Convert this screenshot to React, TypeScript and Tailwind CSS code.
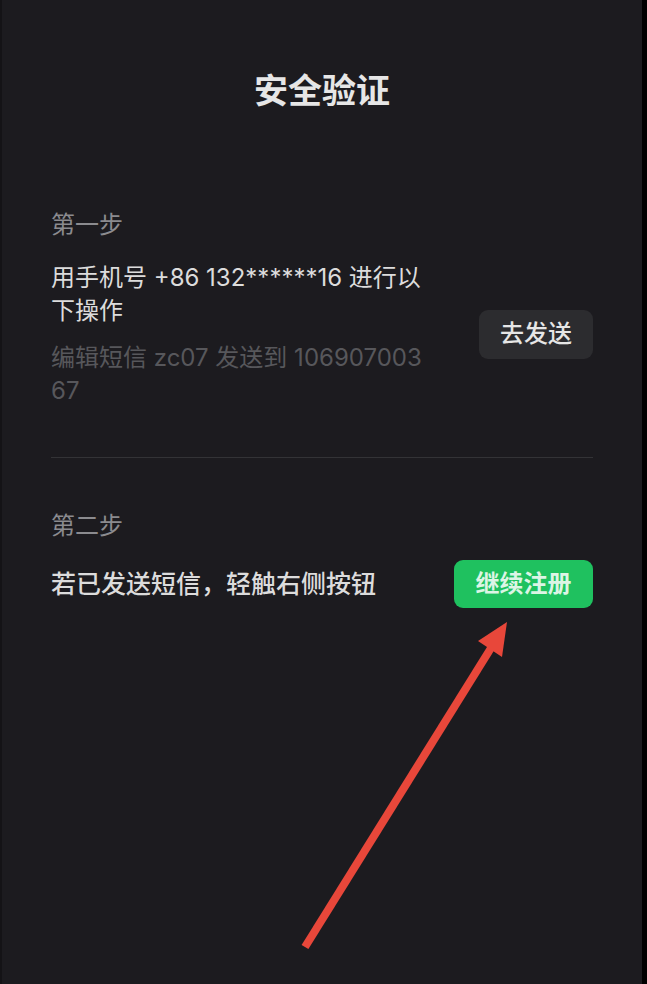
import React from 'react';

const font = { fontFamily: '"Inter", "Noto Sans CJK SC", sans-serif' };

function StepLabel({ children }: { children: React.ReactNode }) {
  return <div className="text-[24px] leading-[33px] text-[#8b8b8f]">{children}</div>;
}

// 红色标注箭头，盖在页面上
function Arrow() {
  return (
    <svg className="pointer-events-none absolute inset-0" width="647" height="984" viewBox="0 0 647 984">
      <line x1="305" y1="947" x2="491" y2="648" stroke="#e8473a" strokeWidth="8" />
      <polygon points="507,622 478,641 502,657" fill="#e8473a" />
    </svg>
  );
}

export default function App() {
  return (
    <div className="relative flex h-[984px] w-[647px] bg-black" style={font}>
      <div className="flex w-[642px] flex-col border-l-2 border-[#141316] bg-[#1c1b1f] px-[49px] pt-[71px]">
        <h1 className="text-center text-[34px] font-semibold leading-[40px] text-[#e6e6e6]">安全验证</h1>

        {/* 第一步 */}
        <div className="mt-[97px]">
          <StepLabel>第一步</StepLabel>
          <div className="mt-[20px] flex items-center justify-between">
            <div className="w-[390px] text-[24px] leading-[33px]">
              <p className="text-[#dcdcdc]">
                用手机号 +86 132******16 进行以
                <br />
                下操作
              </p>
              <p className="mt-[14px] text-[#57575b]">
                编辑短信 zc07 发送到 106907003
                <br />
                67
              </p>
            </div>
            <button
              type="button"
              className="flex h-[49px] w-[114px] items-center justify-center rounded-[9px] bg-[#2c2c2f] text-[24px] font-medium text-[#e6e6e6]"
            >
              去发送
            </button>
          </div>
        </div>

        <div className="mt-[50px] h-px bg-[#333336]" />

        {/* 第二步 */}
        <div className="mt-[51px]">
          <StepLabel>第二步</StepLabel>
          <div className="mt-[18px] flex items-center justify-between">
            <p className="text-[25px] font-medium leading-[33px] text-[#dcdcdc]">若已发送短信，轻触右侧按钮</p>
            <button
              type="button"
              className="flex h-[48px] w-[139px] items-center justify-center rounded-[9px] bg-[#1fc15f] text-[24px] font-semibold text-[#dcf5e5]"
            >
              继续注册
            </button>
          </div>
        </div>
      </div>
      <div className="w-[5px] bg-black" />
      <Arrow />
    </div>
  );
}
